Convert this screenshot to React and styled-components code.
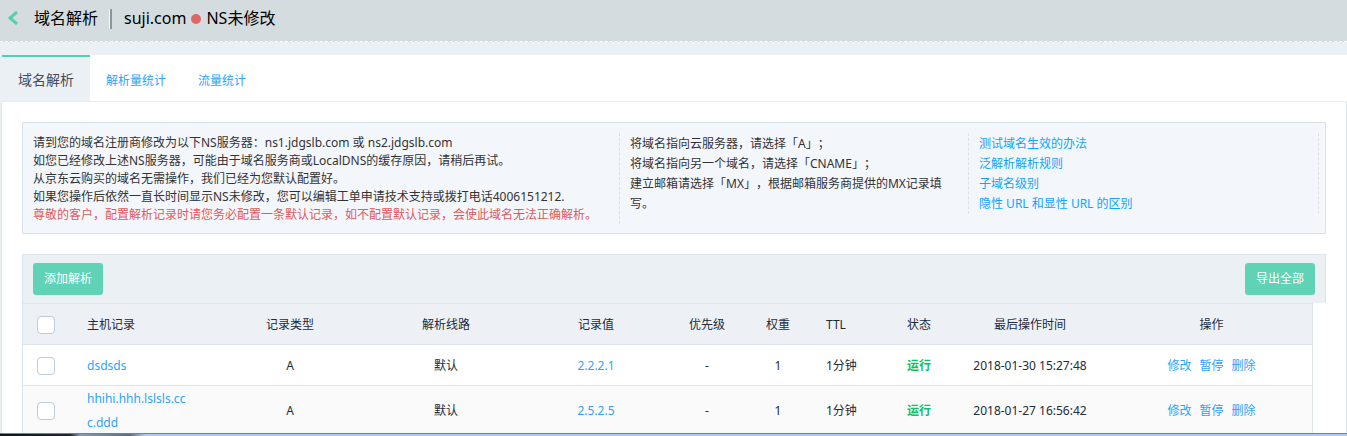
import React from "react";
import styled, { createGlobalStyle } from "styled-components";

const GlobalStyle = createGlobalStyle`
  * { box-sizing: border-box; }
  body {
    margin: 0;
    background: #ebf0f5;
    color: #333;
    font: 12px/18px "Noto Sans", "Noto Sans CJK SC", sans-serif;
    text-spacing-trim: space-all;
  }
  a { color: #2ba4fb; text-decoration: none; }
`;

const Page = styled.div`
  display: flex;
  flex-direction: column;
  height: 100vh;
  overflow: hidden;
`;

const Header = styled.header`
  flex: none;
  display: flex;
  align-items: center;
  height: 42px;
  padding: 0 8px 5px;
  background: #d5dcdf;
  border-bottom: 1px dashed #fff;
  color: #000;
  font-size: 16px;
  line-height: 24px;
`;

const BackButton = styled.button`
  display: flex;
  margin: 0 16px 0 0;
  padding: 0;
  border: 0;
  background: none;
`;

const Title = styled.h1`
  margin: 0;
  padding-right: 11px;
  font-size: 16px;
  font-weight: 400;
`;

const Domain = styled.div`
  display: flex;
  align-items: center;
  gap: 5px;
  position: relative;
  padding-left: 15px;

  &::before {
    content: "";
    position: absolute;
    left: 0;
    top: 3px;
    width: 2px;
    height: 20px;
    background: #8f9496;
    border-left: 1px solid #f4f6f7;
  }
`;

const StatusDot = styled.span`
  width: 10px;
  height: 10px;
  margin-top: 2px;
  border-radius: 50%;
  background: #dc6765;
`;

const Main = styled.main`
  flex: 1;
  min-height: 0;
  overflow: hidden;
  display: flex;
  flex-direction: column;
  padding: 13px 0 0 1px;
`;

const Tabs = styled.nav`
  flex: none;
  display: flex;
  height: 47px;
  margin-left: 1px;
  background: #fff;
  border-bottom: 1px solid #e9edf0;
`;

const Tab = styled.a`
  padding: ${(p) => (p.$active ? "14px 16px 0" : "15px 16px 0")};
  border-top: 2px solid ${(p) => (p.$active ? "#56cfb1" : "transparent")};
  background: ${(p) => (p.$active ? "#ebf0f5" : "none")};
  font-size: ${(p) => (p.$active ? "14px" : "12px")};

  && { color: ${(p) => (p.$active ? "#4a4a55" : "#2ba4fb")}; }
`;

const Panel = styled.section`
  flex: 1 0 auto;
  padding: 20px 20px 0;
  background: #fff;
  border: solid #dde4ea;
  border-width: 0 1px;
`;

const Notice = styled.div`
  display: flex;
  align-items: flex-start;
  padding: 10px 6px 9px 10px;
  min-height: 112px;
  margin-bottom: 20px;
  background: #f3f6fb;
  border: 1px solid #d9e2ea;
`;

const NoticeColumn = styled.div`
  flex: ${(p) => p.$grow} 1 0;
  min-width: 0;
  padding: ${(p) => (p.$first ? "1px 0 0" : "1px 20px 0 10px")};
  border-right: 1px dashed #dde1e6;
  line-height: ${(p) => (p.$first ? "18px" : "20px")};
`;

const Line = styled.p`
  margin: 0;
  color: ${(p) => (p.$warn ? "#e05a5c" : "inherit")};
`;

const HelpLink = styled.a`
  display: block;

  && { color: #0ea5ff; }
`;

const Toolbar = styled.div`
  display: flex;
  justify-content: space-between;
  height: 49px;
  padding: 8px 10px;
  background: #ebf0f5;
  border: 1px solid #dde4ea;
  border-bottom: 0;
`;

const ActionButton = styled.button`
  height: 32px;
  padding: 0 11px;
  border: 0;
  border-radius: 3px;
  background: #60d2b5;
  color: #fff;
  font: inherit;
`;

const TableWrap = styled.div`
  padding-right: 14px;
`;

const Table = styled.table`
  width: 100%;
  table-layout: fixed;
  border-collapse: separate;
  border-spacing: 0;
  border: solid #dde4ea;
  border-width: 1px 1px 0 0;
  line-height: 24px;
`;

const Row = styled.tr`
  height: 41px;
  background: ${(p) => p.$tone};
  color: #222b3a;
`;

const Cell = styled.td`
  padding: ${(p) => (p.$break ? "1px 18px 0 10px" : "1px 10px 0")};
  border-bottom: 1px solid #dde4ea;
  text-align: ${(p) => p.$align || "center"};
  font-weight: 400;
  word-break: ${(p) => (p.$break ? "break-all" : "normal")};

  &:first-child { border-left: 1px solid #dde4ea; padding: 1px 0 0 14px; text-align: left; }
`;

const Check = styled.input`
  appearance: none;
  display: block;
  width: 18px;
  height: 18px;
  margin: 0;
  border: 1px solid #bfcbd9;
  border-radius: 4px;
  background: #fff;
`;

const Running = styled.strong`
  color: #13bf63;
`;

const Actions = styled.div`
  display: flex;
  justify-content: center;
  gap: 8px;
`;

const Taskbar = styled.footer`
  flex: none;
  height: 3px;
  border-top: 1px solid #6f8397;
  background: linear-gradient(90deg, #0c141e 0, #1b2838 70px, #7d9cbb 80px, #55708c 130px, #a9cdf0 145px);
`;

const columns = [
  { label: "主机记录", width: 129, align: "left" },
  { label: "记录类型", width: 168 },
  { label: "解析线路", width: 144 },
  { label: "记录值", width: 156 },
  { label: "优先级", width: 66 },
  { label: "权重", width: 76 },
  { label: "TTL", width: 73, align: "left" },
  { label: "状态", width: 60 },
  { label: "最后操作时间", width: 162 },
  { label: "操作", width: 201 },
];

const records = [
  { host: "dsdsds", value: "2.2.2.1", time: "2018-01-30 15:27:48", tone: "#fff" },
  { host: "hhihi.hhh.lslsls.ccc.ddd", value: "2.5.2.5", time: "2018-01-27 16:56:42", tone: "#fafafa" },
];

export default function App() {
  return (
    <Page lang="zh-CN">
      <GlobalStyle />
      <Header>
        <BackButton type="button" aria-label="返回">
          <svg width="10" height="14" viewBox="0 0 10 14" fill="none" stroke="#56cfb1" strokeWidth="3">
            <path d="M9 1 2 7l7 6" />
          </svg>
        </BackButton>
        <Title>域名解析</Title>
        <Domain>
          <span>suji.com</span>
          <StatusDot />
          <span>NS未修改</span>
        </Domain>
      </Header>
      <Main>
        <Tabs>
          <Tab href="#records" $active>域名解析</Tab>
          <Tab href="#queries">解析量统计</Tab>
          <Tab href="#traffic">流量统计</Tab>
        </Tabs>
        <Panel>
          <Notice>
            <NoticeColumn $grow={586} $first>
              <Line>请到您的域名注册商修改为以下NS服务器：ns1.jdgslb.com 或 ns2.jdgslb.com</Line>
              <Line>如您已经修改上述NS服务器，可能由于域名服务商或LocalDNS的缓存原因，请稍后再试。</Line>
              <Line>从京东云购买的域名无需操作，我们已经为您默认配置好。</Line>
              <Line>如果您操作后依然一直长时间显示NS未修改，您可以编辑工单申请技术支持或拨打电话4006151212.</Line>
              <Line $warn>尊敬的客户，配置解析记录时请您务必配置一条默认记录，如不配置默认记录，会使此域名无法正确解析。</Line>
            </NoticeColumn>
            <NoticeColumn $grow={318}>
              <Line>将域名指向云服务器，请选择「A」；</Line>
              <Line>将域名指向另一个域名，请选择「CNAME」；</Line>
              <Line>建立邮箱请选择「MX」，根据邮箱服务商提供的MX记录填写。</Line>
            </NoticeColumn>
            <NoticeColumn $grow={319}>
              <HelpLink href="#verify">测试域名生效的办法</HelpLink>
              <HelpLink href="#wildcard">泛解析解析规则</HelpLink>
              <HelpLink href="#levels">子域名级别</HelpLink>
              <HelpLink href="#url">隐性 URL 和显性 URL 的区别</HelpLink>
            </NoticeColumn>
          </Notice>
          <Toolbar>
            <ActionButton type="button">添加解析</ActionButton>
            <ActionButton type="button">导出全部</ActionButton>
          </Toolbar>
          <TableWrap>
            <Table>
              <colgroup>
                <col width={55} />
                {columns.map((c) => <col key={c.label} width={c.width} />)}
              </colgroup>
              <thead>
                <Row $tone="#edf1f6">
                  <Cell as="th"><Check type="checkbox" aria-label="全选" /></Cell>
                  {columns.map((c) => <Cell as="th" key={c.label} $align={c.align}>{c.label}</Cell>)}
                </Row>
              </thead>
              <tbody>
                {records.map((r) => (
                  <Row key={r.host} $tone={r.tone}>
                    <Cell><Check type="checkbox" aria-label={r.host} /></Cell>
                    <Cell $align="left" $break><a href="#host">{r.host}</a></Cell>
                    <Cell>A</Cell>
                    <Cell>默认</Cell>
                    <Cell><a href="#value">{r.value}</a></Cell>
                    <Cell>-</Cell>
                    <Cell>1</Cell>
                    <Cell $align="left">1分钟</Cell>
                    <Cell><Running>运行</Running></Cell>
                    <Cell>{r.time}</Cell>
                    <Cell>
                      <Actions>
                        <a href="#edit">修改</a>
                        <a href="#pause">暂停</a>
                        <a href="#delete">删除</a>
                      </Actions>
                    </Cell>
                  </Row>
                ))}
              </tbody>
            </Table>
          </TableWrap>
        </Panel>
      </Main>
      <Taskbar />
    </Page>
  );
}
